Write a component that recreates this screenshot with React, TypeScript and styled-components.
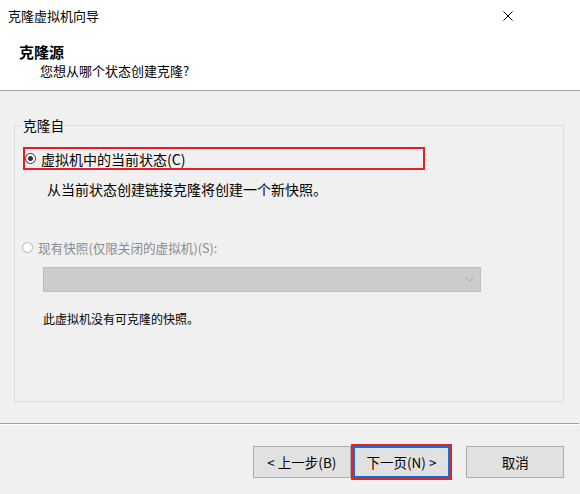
import styled, { createGlobalStyle } from "styled-components";

const GlobalStyle = createGlobalStyle`
  html, body {
    margin: 0;
    padding: 0;
    background: #f0f0f0;
  }
  body {
    font-family: "Microsoft YaHei UI", "Noto Sans CJK SC", sans-serif;
    color: #000;
  }
`;

const Window = styled.div`
  width: 580px;
  height: 494px;
  background: #f0f0f0;
  display: flex;
  flex-direction: column;
  overflow: hidden;
`;

const Header = styled.div`
  background: #fff;
  height: 90px;
  border-bottom: 1px solid #a0a0a0;
  flex-shrink: 0;
`;

const TitleBar = styled.div`
  height: 32px;
  display: flex;
  align-items: center;
  justify-content: space-between;
  padding: 0 67px 0 8px;
`;

const Title = styled.span`
  font-size: 13px;
  line-height: 32px;
`;

const CloseIcon = styled.svg`
  width: 10px;
  height: 10px;
  display: block;
`;

const HeaderTitle = styled.div`
  font-size: 15px;
  font-weight: bold;
  line-height: 20px;
  padding-left: 19px;
  margin-top: 10px;
`;

const HeaderSub = styled.div`
  font-size: 13px;
  line-height: 18px;
  padding-left: 40px;
`;

const Body = styled.div`
  flex: 1;
  padding: 26px 16px 0 14px;
`;

const GroupBox = styled.fieldset`
  margin: 0;
  padding: 0;
  border: 1px solid #dcdcdc;
  height: 285px;
  box-sizing: border-box;
  min-width: 0;
`;

const GroupLabel = styled.legend`
  font-size: 13.7px;
  line-height: 16px;
  padding: 0 1px;
  margin-left: 7px;
`;

const GroupInner = styled.div`
  display: flex;
  flex-direction: column;
  align-items: flex-start;
`;

const RadioRow = styled.div<{ $highlighted?: boolean; $disabled?: boolean }>`
  display: flex;
  align-items: center;
  gap: 5px;
  box-sizing: border-box;
  width: ${(p) => (p.$highlighted ? "402px" : "auto")};
  height: ${(p) => (p.$highlighted ? "23px" : "20px")};
  margin-left: ${(p) => (p.$highlighted ? "8px" : "7px")};
  margin-top: ${(p) => (p.$highlighted ? "14px" : "38px")};
  border: ${(p) => (p.$highlighted ? "2px solid #ed1c24" : "none")};
  color: ${(p) => (p.$disabled ? "#8c8c8c" : "#000")};
  font-size: ${(p) => (p.$disabled ? "12.6px" : "14px")};
`;

const RadioDot = styled.span<{ $checked?: boolean; $disabled?: boolean }>`
  width: 11px;
  height: 11px;
  box-sizing: border-box;
  border-radius: 50%;
  border: 1px solid ${(p) => (p.$disabled ? "#b4b4b4" : "#333")};
  background: #fff;
  display: flex;
  align-items: center;
  justify-content: center;
  flex-shrink: 0;
  &::after {
    content: "";
    display: ${(p) => (p.$checked ? "block" : "none")};
    width: 5px;
    height: 5px;
    border-radius: 50%;
    background: #333;
  }
`;

const Description = styled.div<{ $plain?: boolean }>`
  font-size: ${(p) => (p.$plain ? "12px" : "14px")};
  line-height: 20px;
  margin-left: ${(p) => (p.$plain ? "28px" : "32px")};
  margin-top: ${(p) => (p.$plain ? "17px" : "9px")};
`;

const ComboBox = styled.div`
  width: 438px;
  height: 25px;
  box-sizing: border-box;
  margin-left: 28px;
  margin-top: 10px;
  background: #cccccc;
  border: 1px solid #bfbfbf;
  display: flex;
  align-items: center;
  justify-content: flex-end;
  padding-right: 6px;
`;

const Separator = styled.div`
  height: 1px;
  background: #a0a0a0;
  border-bottom: 1px solid #fff;
  margin-right: 1px;
  flex-shrink: 0;
`;

const Footer = styled.div`
  height: 69px;
  display: flex;
  align-items: flex-start;
  padding: 21px 16px 0 253px;
  box-sizing: border-box;
  flex-shrink: 0;
`;

const Button = styled.button<{ $primary?: boolean; $gap?: number }>`
  width: 98px;
  height: 32px;
  box-sizing: border-box;
  margin: 0 0 0 ${(p) => p.$gap ?? 0}px;
  padding: 0;
  background: #e1e1e1;
  border: ${(p) => (p.$primary ? "2px solid #0078d7" : "1px solid #adadad")};
  outline: ${(p) => (p.$primary ? "2px solid #ed1c24" : "none")};
  font-family: inherit;
  font-size: 13.5px;
  color: #000;
`;

export default function App() {
  return (
    <>
      <GlobalStyle />
      <Window>
        <Header>
          <TitleBar>
            <Title>克隆虚拟机向导</Title>
            <CloseIcon viewBox="0 0 10 10">
              <path d="M0.5 0.5 L9.5 9.5 M9.5 0.5 L0.5 9.5" stroke="#000" strokeWidth="1" fill="none" />
            </CloseIcon>
          </TitleBar>
          <HeaderTitle>克隆源</HeaderTitle>
          <HeaderSub>您想从哪个状态创建克隆?</HeaderSub>
        </Header>
        <Body>
          <GroupBox>
            <GroupLabel>克隆自</GroupLabel>
            <GroupInner>
              <RadioRow $highlighted>
                <RadioDot $checked />
                <span>虚拟机中的当前状态(C)</span>
              </RadioRow>
              <Description>从当前状态创建链接克隆将创建一个新快照。</Description>
              <RadioRow $disabled>
                <RadioDot $disabled />
                <span>现有快照(仅限关闭的虚拟机)(S):</span>
              </RadioRow>
              <ComboBox>
                <svg width="9" height="6" viewBox="0 0 9 6">
                  <path d="M0.5 0.5 L4.5 4.5 L8.5 0.5" stroke="#a8a8a8" fill="none" />
                </svg>
              </ComboBox>
              <Description $plain>此虚拟机没有可克隆的快照。</Description>
            </GroupInner>
          </GroupBox>
        </Body>
        <Separator />
        <Footer>
          <Button>&lt; 上一步(B)</Button>
          <Button $primary $gap={2}>下一页(N) &gt;</Button>
          <Button $gap={16}>取消</Button>
        </Footer>
      </Window>
    </>
  );
}
